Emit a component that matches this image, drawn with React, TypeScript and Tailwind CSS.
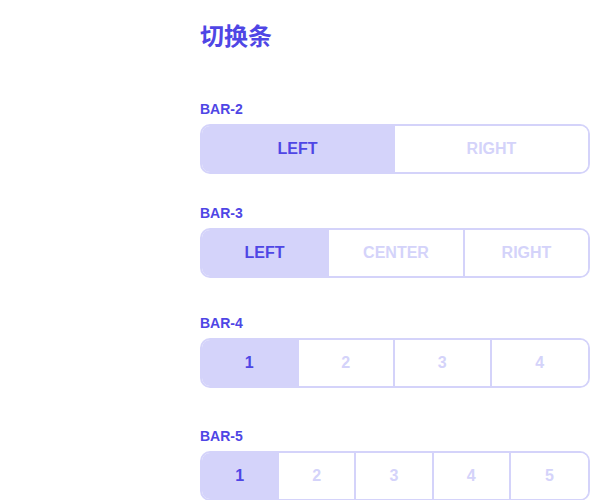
const font = { fontFamily: '"Liberation Sans", Arial, "Noto Sans CJK SC", sans-serif' };

type BarProps = {
  label: string;
  items: string[];
  cols: string;
  className?: string;
};

function Bar({ label, items, cols, className = "" }: BarProps) {
  return (
    <section className={className}>
      <div className="mb-[6px] h-[18px] text-[14px] leading-[18px] font-bold text-[#4f46e5]">{label}</div>
      <div className={`grid h-[50px] overflow-hidden rounded-[10px] border-2 border-[#d4d3fa] ${cols}`}>
        {items.map((item, i) => {
          const last = i === items.length - 1;
          const tone = i === 0 ? "bg-[#d4d3fa] text-[#4f46e5]" : "bg-white text-[#d4d3fa]";
          return (
            <div
              key={item}
              className={`flex items-center justify-center text-base font-bold ${tone} ${
                last ? "" : "border-r-2 border-[#d4d3fa]"
              }`}
            >
              {item}
            </div>
          );
        })}
      </div>
    </section>
  );
}

export default function App() {
  return (
    <div className="min-h-[500px] bg-white" style={font}>
      <div className="ml-[200px] w-[390px] pt-[21px]">
        <h1 className="h-8 text-2xl leading-8 font-bold text-[#4f46e5]">切换条</h1>

        <Bar label="BAR-2" items={["LEFT", "RIGHT"]} cols="grid-cols-2" className="mt-[47px]" />
        <Bar
          label="BAR-3"
          items={["LEFT", "CENTER", "RIGHT"]}
          cols="grid-cols-[127px_136px_1fr]"
          className="mt-[30px]"
        />
        <Bar label="BAR-4" items={["1", "2", "3", "4"]} cols="grid-cols-4" className="mt-[36px]" />
        <Bar label="BAR-5" items={["1", "2", "3", "4", "5"]} cols="grid-cols-5" className="mt-[39px]" />
      </div>
    </div>
  );
}
